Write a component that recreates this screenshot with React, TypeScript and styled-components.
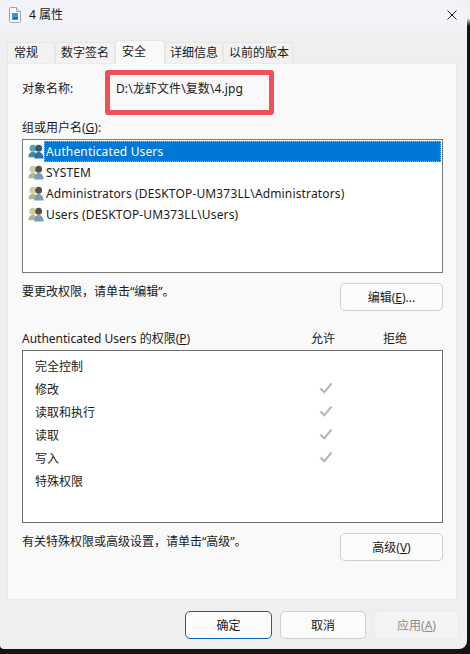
import React from "react";
import styled, { createGlobalStyle } from "styled-components";

const Global = createGlobalStyle`
  html, body { margin: 0; padding: 0; }
  body {
    width: 470px;
    height: 654px;
    overflow: hidden;
    background: linear-gradient(to bottom, #f0f0f0 0, #f0f0f0 18px, #141414 26px, #141414 100%);
  }
  #root { width: 470px; height: 654px; }
  * { box-sizing: border-box; }
`;

const Win = styled.div`
  width: 467px;
  height: 649px;
  background: #efefef;
  border-radius: 6px 8px 8px 4px;
  overflow: hidden;
  display: flex;
  flex-direction: column;
  color: #1a1a1a;
  font-family: "Noto Sans", "Noto Sans CJK SC", sans-serif;
  font-size: 12px;
`;

const TitleBar = styled.div`
  height: 31px;
  flex: none;
  background: #f1f3f8;
  display: flex;
  align-items: center;
  padding: 0 10px 2px 9px;
  gap: 8px;
`;

const TitleText = styled.span`
  flex: 1;
  font-size: 12px;
  line-height: 16px;
`;

const Tabs = styled.div`
  flex: none;
  height: 32px;
  padding-left: 7px;
  display: flex;
  align-items: flex-end;
  position: relative;
  z-index: 1;
`;

const Tab = styled.div<{ $active?: boolean; $w: number; $pl: number }>`
  width: ${(p) => p.$w}px;
  height: ${(p) => (p.$active ? 24 : 21)}px;
  margin-bottom: ${(p) => (p.$active ? -1 : 0)}px;
  background: ${(p) => (p.$active ? "#f9f9f9" : "#f2f2f2")};
  border: 1px solid #e6e6e6;
  border-bottom: none;
  border-radius: 3px 3px 0 0;
  font-size: 12px;
  line-height: 16px;
  padding: ${(p) => (p.$active ? 3 : 2)}px 0 0 ${(p) => p.$pl}px;
  white-space: nowrap;
`;

const Panel = styled.div`
  margin: 0 10px 0 7px;
  height: 537px;
  flex: none;
  background: #f9f9f9;
  border: 1px solid #ebebeb;
  padding: 0 13px 0 14px;
  display: flex;
  flex-direction: column;
`;

const ObjectRow = styled.div`
  height: 54px;
  flex: none;
  display: flex;
  align-items: flex-start;
  padding-top: 16px;
  line-height: 18px;
`;

const ObjectLabel = styled.span`
  width: 94px;
  flex: none;
`;

const ObjectPath = styled.span`
  display: inline-block;
  height: 18px;
  position: relative;
  letter-spacing: 0.1px;
`;

const Highlight = styled.div`
  position: absolute;
  left: -11px;
  top: -10px;
  width: 169px;
  height: 45px;
  border: 5px solid #ef5158;
  border-radius: 3px;
`;

const GroupLabel = styled.div`
  height: 21px;
  flex: none;
  line-height: 18px;
  padding-top: 1px;
`;

const ListBox = styled.div`
  height: 134px;
  flex: none;
  background: #fff;
  border: 1px solid #7a7a7a;
  padding: 1px 1px 0 5px;
`;

const ListItem = styled.div`
  height: 21px;
  display: flex;
  align-items: center;
  white-space: nowrap;
  line-height: 22px;
  letter-spacing: 0.15px;
`;

const ItemText = styled.span<{ $selected?: boolean }>`
  height: 21px;
  flex: ${(p) => (p.$selected ? 1 : "none")};
  padding-left: 2px;
  background: ${(p) => (p.$selected ? "#0078d7" : "transparent")};
  color: ${(p) => (p.$selected ? "#fff" : "#1a1a1a")};
  outline: ${(p) => (p.$selected ? "1px dotted #7fbdf0" : "none")};
  outline-offset: -1px;
`;

const ActionRow = styled.div`
  margin-top: 10px;
  display: flex;
  justify-content: space-between;
  align-items: flex-start;
  flex: none;
`;

const Hint = styled.span`
  line-height: 18px;
`;

const Btn = styled.div<{ $w?: number; $primary?: boolean; $disabled?: boolean }>`
  width: ${(p) => p.$w ?? 103}px;
  height: 28px;
  flex: none;
  padding-top: 1px;
  background: ${(p) => (p.$disabled ? "#f4f4f4" : "#fcfcfc")};
  border: 1px solid ${(p) => (p.$primary ? "#0067c0" : p.$disabled ? "#ececec" : "#cfcfcf")};
  border-radius: 5px;
  display: flex;
  align-items: center;
  justify-content: center;
  color: ${(p) => (p.$disabled ? "#8a8a8a" : "#1a1a1a")};
  line-height: 18px;
`;

const Key = styled.span`
  text-decoration: underline;
  text-underline-offset: 1px;
`;

const PermHeader = styled.div`
  margin-top: 18px;
  height: 21px;
  padding: 1px 12px 0 0;
  display: flex;
  align-items: flex-start;
  line-height: 18px;
  flex: none;
`;

const PermTitle = styled.span`
  flex: 1;
`;

const PermCol = styled.span`
  width: 72px;
  flex: none;
  text-align: center;
`;

const PermBox = styled.div`
  height: 173px;
  flex: none;
  background: #fff;
  border: 1px solid #6f6f6f;
  padding-top: 4px;
`;

const PermRow = styled.div`
  height: 23px;
  display: flex;
  align-items: center;
  padding-left: 12px;
  line-height: 18px;
`;

const PermName = styled.span`
  flex: 1;
`;

const CheckCell = styled.span`
  width: 72px;
  flex: none;
  display: flex;
  justify-content: center;
  margin: 0 80px 3px 0;
`;

const Footer = styled.div`
  flex: 1;
  display: flex;
  justify-content: flex-end;
  align-items: flex-start;
  gap: 8px;
  padding: 11px 8px 0 0;
`;

const FileIcon = () => (
  <svg width="12" height="16" viewBox="0 0 12 16">
    <path d="M1.500 .5h6l4 4v10a1 1 0 0 1-1 1h-9a1 1 0 0 1-1-1v-13a1 1 0 0 1 1-1z" fill="#fff" stroke="#9aa2ad" />
    <path d="M7.500 .5v4h4" fill="#e9edf2" stroke="#9aa2ad" />
    <rect x="3" y="6" width="6" height="6.500" fill="#2a9be8" />
    <path d="M3 12.500l2.500-2.500 1.500 1 2-1.500v3z" fill="#0a68b5" />
  </svg>
);

const CloseIcon = () => (
  <svg width="10" height="10" viewBox="0 0 10 10">
    <path d="M.5.5l9 9M9.500.5l-9 9" stroke="#222" strokeWidth="1" fill="none" />
  </svg>
);

const UsersIcon = ({ selected }: { selected?: boolean }) => {
  const back = selected ? "#3d8a9a" : "#a9bb8c";
  const backHead = selected ? "#5aa0b0" : "#cfc9a6";
  const front = selected ? "#2d6fae" : "#7c9abc";
  const frontHead = selected ? "#35566f" : "#5a4f45";
  return (
    <svg width="16" height="15" viewBox="0 0 18 16" preserveAspectRatio="none" style={{ flex: "none" }}>
      <circle cx="5.500" cy="4.500" r="3.800" fill={backHead} />
      <path d="M.5 14c0-4 2-5.500 5-5.500s5 1.500 5 5.500z" fill={back} />
      <circle cx="12" cy="4.500" r="3.800" fill={frontHead} />
      <path d="M7 15.500c0-4.500 2-7 5-7s5.500 2.500 5.500 7z" fill={front} />
    </svg>
  );
};

const CheckIcon = () => (
  <svg width="14" height="12" viewBox="0 0 14 12">
    <path d="M1.500 6.500l3.800 3.800L12.500 1.500" stroke="#b4b4b4" strokeWidth="2" fill="none" />
  </svg>
);

const users = [
  "Authenticated Users",
  "SYSTEM",
  "Administrators (DESKTOP-UM373LL\\Administrators)",
  "Users (DESKTOP-UM373LL\\Users)",
];

const perms: [string, boolean][] = [
  ["完全控制", false],
  ["修改", true],
  ["读取和执行", true],
  ["读取", true],
  ["写入", true],
  ["特殊权限", false],
];

const tabs: [string, number, number][] = [
  ["常规", 48, 6],
  ["数字签名", 60, 5],
  ["安全", 50, 6],
  ["详细信息", 58, 4],
  ["以前的版本", 70, 5],
];

export default function App() {
  return (
    <>
      <Global />
      <Win>
        <TitleBar>
          <FileIcon />
          <TitleText>4 属性</TitleText>
          <CloseIcon />
        </TitleBar>
        <Tabs>
          {tabs.map(([t, w, pl]) => (
            <Tab key={t} $w={w} $pl={pl} $active={t === "安全"}>
              {t}
            </Tab>
          ))}
        </Tabs>
        <Panel>
          <ObjectRow>
            <ObjectLabel>对象名称:</ObjectLabel>
            <ObjectPath>
              D:\龙虾文件\复数\4.jpg
              <Highlight />
            </ObjectPath>
          </ObjectRow>
          <GroupLabel>
            组或用户名(<Key>G</Key>):
          </GroupLabel>
          <ListBox>
            {users.map((u, i) => (
              <ListItem key={u}>
                <UsersIcon selected={i === 0} />
                <ItemText $selected={i === 0}>{u}</ItemText>
              </ListItem>
            ))}
          </ListBox>
          <ActionRow>
            <Hint>要更改权限，请单击“编辑”。</Hint>
            <Btn>
              编辑(<Key>E</Key>)...
            </Btn>
          </ActionRow>
          <PermHeader>
            <PermTitle>
              Authenticated Users 的权限(<Key>P</Key>)
            </PermTitle>
            <PermCol>允许</PermCol>
            <PermCol>拒绝</PermCol>
          </PermHeader>
          <PermBox>
            {perms.map(([n, c]) => (
              <PermRow key={n}>
                <PermName>{n}</PermName>
                <CheckCell>{c && <CheckIcon />}</CheckCell>
              </PermRow>
            ))}
          </PermBox>
          <ActionRow>
            <Hint>有关特殊权限或高级设置，请单击“高级”。</Hint>
            <Btn>
              高级(<Key>V</Key>)
            </Btn>
          </ActionRow>
        </Panel>
        <Footer>
          <Btn $w={87} $primary>确定</Btn>
          <Btn $w={86}>取消</Btn>
          <Btn $w={85} $disabled>
            应用(<Key>A</Key>)
          </Btn>
        </Footer>
      </Win>
    </>
  );
}
